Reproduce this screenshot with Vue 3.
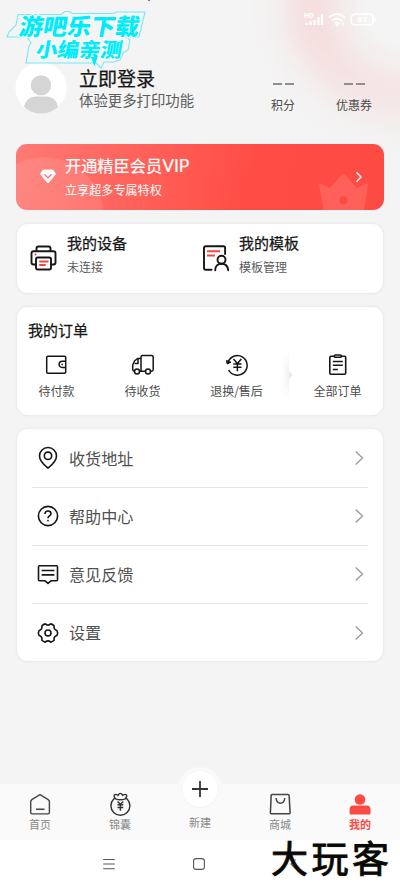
<script setup>
const menu = [
  { name: 'pin', label: '收货地址' },
  { name: 'help', label: '帮助中心' },
  { name: 'chat', label: '意见反馈' },
  { name: 'gear', label: '设置' },
]
</script>

<template>
  <div class="page">
    <div class="arc"></div>
    <span class="speck"></span>
    <svg class="status" width="76" height="18" viewBox="0 0 76 18" fill="none">
      <text x="0" y="7" font-size="7" font-weight="700" fill="#fff" font-family="Roboto, sans-serif">HD</text>
      <path d="M2.500 14v-2M6.500 14v-3.400M10.500 14V9M14.500 14V6M18 14V3" stroke="#fff" stroke-width="2.300" />
      <path d="M25 6.500q8-7 16 0M28 9.800q5-4.500 10 0M30.700 12.600q2.300-2 4.600 0" stroke="#fff" stroke-width="2" />
      <path d="M31.500 13.200h3L33 15.400zM37 11.500l1.600 2.500M40 11l-1.200 4" fill="#fff" stroke="#fff" stroke-width="1" />
      <rect x="47.200" y="3.200" width="22" height="10.600" rx="3.400" stroke="#fff" stroke-width="1.600" />
      <path d="M71.500 6.500v4" stroke="#fff" stroke-width="1.600" />
      <text x="58.300" y="11.400" font-size="8" font-weight="700" fill="#fff" text-anchor="middle" textLength="10" font-family="Roboto, sans-serif">82</text>
    </svg>

    <header class="profile">
      <svg class="avatar" width="52" height="52" viewBox="0 0 52 52">
        <defs><clipPath id="round"><circle cx="26" cy="26" r="25.600" /></clipPath></defs>
        <circle cx="26" cy="26" r="25.600" fill="#fff" />
        <g clip-path="url(#round)" fill="#d5d5d5">
          <circle cx="26" cy="23.400" r="10.200" />
          <path d="M9 45c1-6.500 6-10.500 12-10.500h10c6 0 11 4 12 10.500v8H9z" />
        </g>
      </svg>
      <div class="who">
        <div class="login">立即登录</div>
        <div class="tagline">体验更多打印功能</div>
      </div>
      <div class="stat points"><span class="dashes"><i></i><i></i></span><span>积分</span></div>
      <div class="stat coupons"><span class="dashes"><i></i><i></i></span><span>优惠券</span></div>
    </header>

    <section class="vip">
      <svg class="gem" width="16" height="15" viewBox="0 0 16 15">
        <path d="M3.600 .5h8.800q.5 0 .8.400l2.500 3.400q.400.600-.1 1.100L8.600 13.900q-.6.500-1.200 0L.4 5.400Q0 4.900.3 4.300L2.800.9q.3-.4.800-.4z" fill="#fff" />
        <path d="M4.600 5.600L8 8.800l3.400-3.200" fill="none" stroke="#ff7069" stroke-width="1.300" stroke-linecap="round" />
      </svg>
      <div class="vip-text">
        <div class="vip-title">开通精臣会员<span class="latin">VIP</span></div>
        <div class="vip-sub">立享超多专属特权</div>
      </div>
      <svg class="crown" width="54" height="37" viewBox="0 0 54 37">
        <path fill-rule="evenodd" d="M2 11.500q0-1.800 1.700-1L13 15 25.200 1.200q1.300-1.500 2.600 0L40 15l9.500-4.500q2-.8 1.800 1L47 37H6.500zM26.500 23a4.200 4.200 0 1 0 .01 0z" fill="#ff6059" />
      </svg>
      <svg class="vip-arrow" width="8" height="12" viewBox="0 0 8 12"><path d="M1.500 1.200L6 6l-4.500 4.800" fill="none" stroke="#fff" stroke-width="1.400" /></svg>
    </section>

    <section class="card duo">
      <div class="duo-item">
        <svg width="28" height="28" viewBox="0 0 28 28" fill="none" stroke="#161616" stroke-width="1.900" stroke-linejoin="round">
          <path d="M6.500 7V4.500q0-2 2-2h10q2 0 2 2V7M6 20.500H3.500q-2 0-2-2V9.200q0-2 2-2h20q2 0 2 2v9.300q0 2-2 2H21" />
          <rect x="6" y="13.500" width="15" height="12" rx="1.800" />
          <path d="M9.200 17.500h9.300M9.200 21h6.500" stroke="#f64640" stroke-width="2" /><circle cx="5.500" cy="10.500" r="1" fill="#f64640" stroke="none" />
        </svg>
        <div><div class="duo-title">我的设备</div><div class="duo-sub">未连接</div></div>
      </div>
      <div class="duo-item second">
        <svg width="28" height="28" viewBox="0 0 28 28" fill="none" stroke="#161616" stroke-width="1.900" stroke-linecap="round" stroke-linejoin="round">
          <path d="M9.500 25.700H3.800q-1.800 0-1.800-1.800V4q0-1.800 1.800-1.800h17.700q1.600 0 1.600 1.600v6.300" />
          <path d="M5 7.200h13M5 11.500h8" stroke="#f64640" stroke-width="1.900" stroke-linecap="butt" />
          <circle cx="19.500" cy="15.700" r="4" />
          <path d="M13.200 26.200c0-4 2.500-6.500 6.300-6.500s6.300 2.500 6.700 6.500" />
        </svg>
        <div><div class="duo-title">我的模板</div><div class="duo-sub">模板管理</div></div>
      </div>
    </section>

    <section class="card orders">
      <h2>我的订单</h2>
      <div class="order-row">
        <div class="order">
          <svg width="24" height="24" viewBox="0 0 24 24" fill="none" stroke="#161616" stroke-width="1.500">
            <rect x="1.700" y="3.200" width="19" height="17" rx="1.200" />
            <path d="M20.500 8.300h-3.300a3.100 3.100 0 0 0 0 6.200h3.300" /><circle cx="17.200" cy="11.400" r=".8" fill="#161616" stroke="none" />
          </svg><span>待付款</span>
        </div>
        <div class="order">
          <svg width="24" height="24" viewBox="0 0 24 24" fill="none" stroke="#161616" stroke-width="1.500" stroke-linejoin="round">
            <path d="M10 18.200V4q0-1.500 1.500-1.500h9q1.700 0 1.700 1.700v12.300q0 1.700-1.700 1.700H19M14 18.200H8.500M10 5.500H6.500L3.500 8 1.700 12v4.500q0 1.700 1.700 1.700" />
            <path d="M3.500 10.500H7V6" /><circle cx="6" cy="18.400" r="2.500" fill="#fff" /><circle cx="17" cy="18.400" r="2.500" fill="#fff" />
          </svg><span>待收货</span>
        </div>
        <div class="order">
          <svg width="24" height="24" viewBox="0 0 24 24" fill="none" stroke="#161616" stroke-width="1.500">
            <path d="M3 9.500A9.800 9.800 0 1 1 3.700 17M3.700 17.200l1 1.200" /><path d="M1.500 7.500l.6 3.500L6 9.200z" fill="#161616" stroke-width="1" />
            <path d="M8.500 6l3.900 4.600L16.300 6M8.300 11h8.200M8.300 14.200h8.200M12.400 10.600v7.600" />
          </svg><span>退换/售后</span>
        </div>
        <div class="divider"><i></i></div>
        <div class="order">
          <svg width="24" height="24" viewBox="0 0 24 24" fill="none" stroke="#161616" stroke-width="1.600">
            <path d="M8.500 3.200H5q-1.200 0-1.200 1.200v15.700q0 1.200 1.200 1.200h13.500q1.200 0 1.200-1.200V4.400q0-1.200-1.200-1.200H15" />
            <rect x="8.400" y="2" width="6.800" height="2.300" rx=".8" /><path d="M6.800 8.500h10M6.800 12.300h10M6.800 16.500h5" />
          </svg><span>全部订单</span>
        </div>
      </div>
    </section>

    <nav class="card menu">
      <div v-for="m in menu" :key="m.name" class="menu-row">
        <svg width="24" height="24" viewBox="0 0 24 24" fill="none" stroke="#161616" stroke-width="1.600" stroke-linejoin="round">
          <template v-if="m.name === 'pin'">
            <path d="M12 22.200C9.800 20.400 3.500 15.500 3.500 10a8.500 8.500 0 0 1 17 0c0 5.500-6.300 10.400-8.500 12.200z" /><circle cx="12" cy="9.800" r="3.700" />
          </template>
          <template v-else-if="m.name === 'help'">
            <circle cx="12" cy="12" r="9.600" /><path d="M9 10q0-3 3-3t3 2.600q0 1.400-1.500 2.300-1.500 1-1.500 2.300" /><circle cx="12" cy="16.600" r=".9" fill="#161616" stroke="none" />
          </template>
          <template v-else-if="m.name === 'chat'">
            <path d="M3.500 3.800h17q1 0 1 1v13q0 1-1 1H15l-3 2.500-3-2.500H3.500q-1 0-1-1v-13q0-1 1-1zM5.600 8.500h12.800M5.600 12.900h12.800" />
          </template>
          <template v-else>
            <path d="M9.300 2.900Q12 5.300 14.700 2.900Q16.700 3.400 18.100 4.800Q17.500 8.400 20.900 9.400Q22.400 12 20.900 14.600Q17.500 15.600 18.100 19.200Q16.700 20.600 14.700 21.100Q12 18.700 9.300 21.100Q7.300 20.600 5.900 19.200Q6.500 15.600 3.100 14.600Q1.600 12 3.100 9.400Q6.500 8.400 5.900 4.800Q7.300 3.400 9.300 2.900z" /><circle cx="12" cy="12" r="3" />
          </template>
        </svg>
        <span class="menu-label">{{ m.label }}</span>
        <svg class="chev" width="10" height="16" viewBox="0 0 10 16"><path d="M1.700 1.500L8.500 8l-6.800 6.500" fill="none" stroke="#999" stroke-width="1.300" /></svg>
      </div>
    </nav>

    <footer class="tabs">
      <div class="tab">
        <svg width="24" height="24" viewBox="0 0 24 24" fill="none" stroke="#444" stroke-width="1.400" stroke-linejoin="round"><path d="M12 2.600l8.200 5q1.200.8 1.200 2v11q0 1.300-1.300 1.300H4q-1.300 0-1.300-1.300v-11q0-1.200 1.100-2zM8 17.200h8.500" /></svg>
        <span>首页</span>
      </div>
      <div class="tab">
        <svg width="24" height="24" viewBox="0 0 24 24" fill="none" stroke="#333" stroke-width="1.400"><circle cx="12.400" cy="13.800" r="9.500" /><path d="M7.500 6.800Q4.500 3 7.500 2.400q2 .2 2.500 1 1.200-2 2.400-2t2.400 2q.7-.8 2.500-1 3 .6 0 4.400-4.900 1.800-9.800 0z" fill="#fafafa" /><path d="M9.500 9.500l2.900 2.800 2.900-2.800M9.500 12.800h5.800M9.500 15.500h5.800M12.400 12.300v6.500" /></svg>
        <span>锦囊</span>
      </div>
      <div class="tab create">
        <div class="fab"><svg width="20" height="20" viewBox="0 0 20 20"><path d="M10 2v16M2 10h16" stroke="#333" stroke-width="1.800" /></svg></div>
        <span>新建</span>
      </div>
      <div class="tab">
        <svg width="24" height="24" viewBox="0 0 24 24" fill="none" stroke="#444" stroke-width="1.500" stroke-linejoin="round"><path d="M4 2.400h16q1 0 1.100 1l1 17q.1 1.400-1.300 1.400H3.700q-1.400 0-1.300-1.400l.8-17q0-1 .8-1z" /><path d="M8 6q.7 5.200 4.400 5.200T16.800 6" /></svg>
        <span>商城</span>
      </div>
      <div class="tab active">
        <svg width="24" height="24" viewBox="0 0 24 24" fill="#fd4a43"><circle cx="12" cy="7.500" r="5.300" /><path d="M5 13.600h14q3.500 0 3.500 4v3.600q0 1.400-1.400 1.400H3q-1.400 0-1.400-1.400v-3.600q0-4 3.400-4z" /></svg>
        <span>我的</span>
      </div>
    </footer>

    <div class="system">
      <svg width="12" height="12" viewBox="0 0 12 12"><path d="M.2 1.500h11.600M.2 6h11.600M.2 10.700h11.600" stroke="#555" stroke-width="1.100" /></svg>
      <svg width="12" height="12" viewBox="0 0 12 12"><rect x=".6" y=".6" width="10.800" height="10.800" rx="2.500" fill="none" stroke="#555" stroke-width="1.100" /></svg>
      <svg width="12" height="12" viewBox="0 0 12 12"><path d="M10.500 1.500L6 6l4.500 4.500" fill="none" stroke="#555" stroke-width="1.100" /></svg>
    </div>

    <svg class="mark" width="146" height="60" viewBox="0 0 146 60">
      <path d="M11 3.500h43l4-3h4l3 2h42l2-1.500h29l-6 25h-13l4 3-2 10-5 3-3 7-6 2H97l-3 6-5-5H19l3-17 2-3-4-6H0l2-5 7-7z" fill="none" stroke="#73e9f7" stroke-width="1.100" />
      <g fill="#00ecfb" stroke="#fbffff" stroke-width="2" paint-order="stroke" font-family="'Noto Sans CJK SC', sans-serif" font-weight="900">
        <text transform="translate(11 23.500) skewX(-10)" font-size="23" textLength="120" lengthAdjust="spacingAndGlyphs">游吧乐下载</text>
        <text transform="translate(28 46) skewX(-10)" font-size="20" textLength="86" lengthAdjust="spacingAndGlyphs">小编亲测</text>
      </g>
      <path d="M84 46l3.500 9.500 3-9.500z" fill="#00ecfb" />
    </svg>
    <div class="brand">大玩客</div>
  </div>
</template>

<style>
body { margin: 0; background: #fff; }
</style>

<style scoped>
.page { position: relative; box-sizing: border-box; width: 400px; height: 889px; overflow: hidden; display: flex; flex-direction: column; background: #f4f4f4; font-family: "Noto Sans CJK SC", sans-serif; color: #161616; }
.page svg { display: block; flex: none; }
.arc { position: absolute; left: 240px; top: 0; width: 160px; height: 180px; background: radial-gradient(circle at 165px 5px, transparent 40px, rgba(250, 175, 172, .12) 62px, rgba(250, 165, 162, .27) 88px, rgba(250, 165, 162, .23) 105px, rgba(250, 175, 172, .06) 130px, transparent 155px); -webkit-mask-image: linear-gradient(#000 20%, rgba(0, 0, 0, .6) 60%); mask-image: linear-gradient(#000 20%, rgba(0, 0, 0, .6) 60%); }
.speck { position: absolute; left: 148px; top: 0; width: 2px; height: 1px; background: #777; }
.status { position: absolute; left: 304px; top: 11px; }
.profile { position: relative; height: 144px; flex: none; box-sizing: border-box; padding: 61px 0 0 15px; display: flex; align-items: flex-start; }
.avatar { margin-top: 1px; }
.who { margin: 5px 0 0 12px; width: 180px; }
.login { font-size: 19px; line-height: 24px; -webkit-text-stroke: .25px; }
.tagline { font-size: 14.400px; line-height: 20px; color: #5c5c5c; }
.stat { display: flex; flex-direction: column; align-items: center; font-size: 12px; line-height: 16px; color: #4c4c4c; padding-top: 22px; gap: 12px; }
.dashes { display: flex; gap: 3px; }
.dashes i { width: 9px; height: 2px; background: #8f8f8f; }
.points { width: 48px; }
.coupons { width: 48px; margin-left: 23px; }
.vip { position: relative; height: 65.500px; flex: none; margin: 0 16px; border-radius: 11px; overflow: hidden; display: flex; align-items: center; color: #fff; background: radial-gradient(circle at 28px 73px, rgba(255, 255, 255, .1) 59px, transparent 60px), linear-gradient(100deg, #ff7a75 0%, #ff645d 30%, #ff4c44 65%, #fd4a42 100%); }
.gem { margin-left: 24px; }
.vip-text { margin-left: 9px; flex: 1; padding-top: 2px; }
.vip-title { font-size: 16.200px; line-height: 25px; -webkit-text-stroke: .2px; white-space: nowrap; }
.latin { font-family: Lato, sans-serif; font-size: 17.500px; }
.vip-sub { font-size: 12.100px; line-height: 24px; }
.crown { position: absolute; right: 13px; bottom: 0; }
.vip-arrow { position: relative; margin-right: 21px; }
.card { box-sizing: border-box; flex: none; margin: 0 17px; background: #fff; border-radius: 11px; box-shadow: 0 0 2px 1px #e9e9e9; }
.duo { margin-top: 14px; height: 69.500px; display: flex; }
.duo-item { display: flex; width: 172px; box-sizing: border-box; padding: 8px 0 0 13px; }
.duo-item > svg { margin: 12.500px 9px 0 0; }
.duo-title { font-size: 15px; line-height: 22px; -webkit-text-stroke: .25px; }
.duo-sub { font-size: 12px; line-height: 25px; color: #5c5c5c; }
.orders { margin-top: 14px; height: 108px; padding: 12px 0 0 11px; }
h2 { margin: 0; font-size: 15px; font-weight: 400; line-height: 22px; -webkit-text-stroke: .25px; }
.order-row { display: flex; align-items: flex-start; padding-top: 12px; }
.order { width: 57px; display: flex; flex-direction: column; align-items: center; gap: 5px; font-size: 12px; line-height: 18px; color: #4c4c4c; white-space: nowrap; }
.order + .order { margin-left: 29px; }
.order + .order:nth-child(3) { margin-left: 37px; }
.divider { width: 14px; height: 50px; margin: -3px 0 0 17px; display: flex; align-items: center; background: linear-gradient(90deg, transparent, #f2f2f2 7px, transparent 7px); -webkit-mask-image: linear-gradient(transparent, #000 40%, #000 60%, transparent); mask-image: linear-gradient(transparent, #000 40%, #000 60%, transparent); }
.divider i { margin-left: 7px; border-left: 4px solid #e9e9e9; border-top: 4px solid transparent; border-bottom: 4px solid transparent; }
.divider + .order { margin-left: 13px; }
.menu { margin-top: 14px; height: 232px; padding: .500px 15px 0; }
.menu-row { box-sizing: border-box; height: 58.100px; display: flex; align-items: center; padding: 0 4px; border-bottom: 1px solid #e6e6e6; }
.menu-row:last-child { border: 0; }
.menu-label { flex: 1; margin: -1px 0 0 9px; font-size: 16.100px; line-height: 24px; color: #505050; }
.tabs { height: 56px; flex: none; margin-top: auto; background: #fafafa; display: flex; }
.tab { width: 80px; box-sizing: border-box; padding-top: 8px; display: flex; flex-direction: column; align-items: center; font-size: 11px; line-height: 17px; color: #888; }
.active { color: #fd4a43; font-weight: 700; }
.create { padding: 0; }
.fab { width: 38px; height: 38px; flex: none; margin: -17px 0 3px; border: 3px solid #fafafa; border-radius: 50%; background: #fff; box-shadow: inset 0 0 2px #ddd; display: flex; align-items: center; justify-content: center; }
.system { height: 49px; flex: none; box-sizing: border-box; padding: 18px 103px 0 103px; background: #fff; display: flex; justify-content: space-between; }
.system svg:nth-child(2) { margin-left: -2px; }
.mark { position: absolute; left: 7px; top: 11px; overflow: visible; }
.brand { position: absolute; left: 271px; top: 831px; font-size: 37px; line-height: 52px; letter-spacing: 3.500px; font-weight: 400; color: #080808; white-space: nowrap; -webkit-text-stroke: .8px; text-shadow: 0 0 2px #c9bd91; }
</style>
